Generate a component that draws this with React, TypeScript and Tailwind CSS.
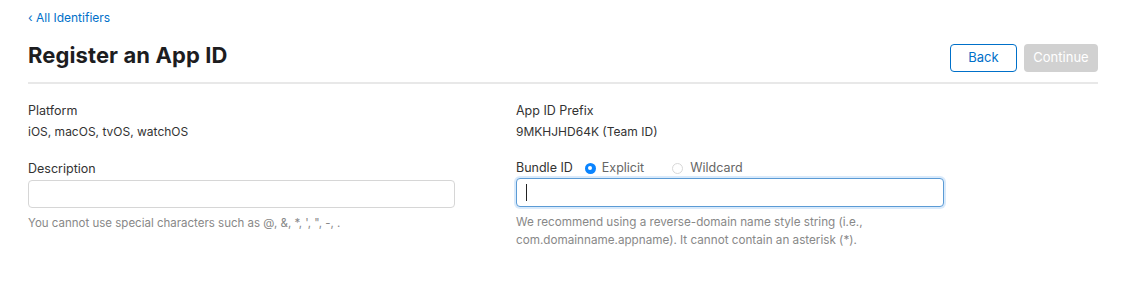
import React from "react";

export default function App() {
  const font = { fontFamily: 'Inter, "Noto Sans", "Liberation Sans", sans-serif' };
  return (
    <div className="w-[1136px] h-[286px] bg-white pl-[28px] pr-[38px] text-[#333]" style={font}>
      <div className="pt-[10px] h-[34px] text-[12px] leading-[16px] text-[#0070c9]">‹ All Identifiers</div>
      <div className="flex items-center justify-between h-[50px] pb-[4px] border-b-2 border-[#e8e8e8]">
        <h1 className="text-[22px] font-bold text-[#1d1d1f] mt-[-2px] tracking-[0.1px]">Register an App ID</h1>
        <div className="flex gap-[7px] items-center mt-[3px]">
          <button className="w-[67px] h-[28px] rounded-[4px] border border-[#0070c9] text-[#0070c9] text-[13px] bg-white">Back</button>
          <button className="w-[74px] h-[28px] rounded-[4px] bg-[#d1d1d1] text-white text-[13px]">Continue</button>
        </div>
      </div>
      <div className="grid grid-cols-[488px_1fr] pt-[18px]">
        <div>
          <div className="text-[12.5px] leading-[18px] text-[#333]">Platform</div>
          <div className="mt-[3px] text-[12px] leading-[18px] text-[#333]">iOS, macOS, tvOS, watchOS</div>
          <div className="mt-[19px] text-[12.5px] leading-[18px] text-[#333]">Description</div>
          <div className="mt-[2px] w-[427px] h-[28px] rounded-[4px] border border-[#d6d6d6] bg-white" />
          <div className="mt-[6px] text-[11.5px] leading-[18px] text-[#888]">You cannot use special characters such as @, &amp;, *, ', ", -, .</div>
        </div>
        <div>
          <div className="text-[12.5px] leading-[18px] text-[#333]">App ID Prefix</div>
          <div className="mt-[3px] text-[12px] leading-[18px] text-[#333]">9MKHJHD64K (Team ID)</div>
          <div className="mt-[18px] flex items-center text-[12.5px] leading-[18px]">
            <span className="text-[#333]">Bundle ID</span>
            <span className="ml-[12px] w-[11px] h-[11px] rounded-full bg-[#0a84ff] flex items-center justify-center">
              <span className="w-[4px] h-[4px] rounded-full bg-white" />
            </span>
            <span className="ml-[6px] text-[#666]">Explicit</span>
            <span className="ml-[28px] w-[11px] h-[11px] rounded-full border border-[#d8d8d8] bg-white" />
            <span className="ml-[7px] text-[#666]">Wildcard</span>
          </div>
          <div className="mt-[1px] w-[428px] h-[29px] rounded-[4px] border border-[#5b9bd5] shadow-[0_0_0_2px_rgba(0,113,227,0.15)] bg-white flex items-center pl-[9px]">
            <span className="w-[1px] h-[17px] bg-[#222]" />
          </div>
          <div className="mt-[6px] text-[11.7px] leading-[18px] text-[#888]">
            We recommend using a reverse-domain name style string (i.e.,<br />
            com.domainname.appname). It cannot contain an asterisk (*).
          </div>
        </div>
      </div>
    </div>
  );
}
